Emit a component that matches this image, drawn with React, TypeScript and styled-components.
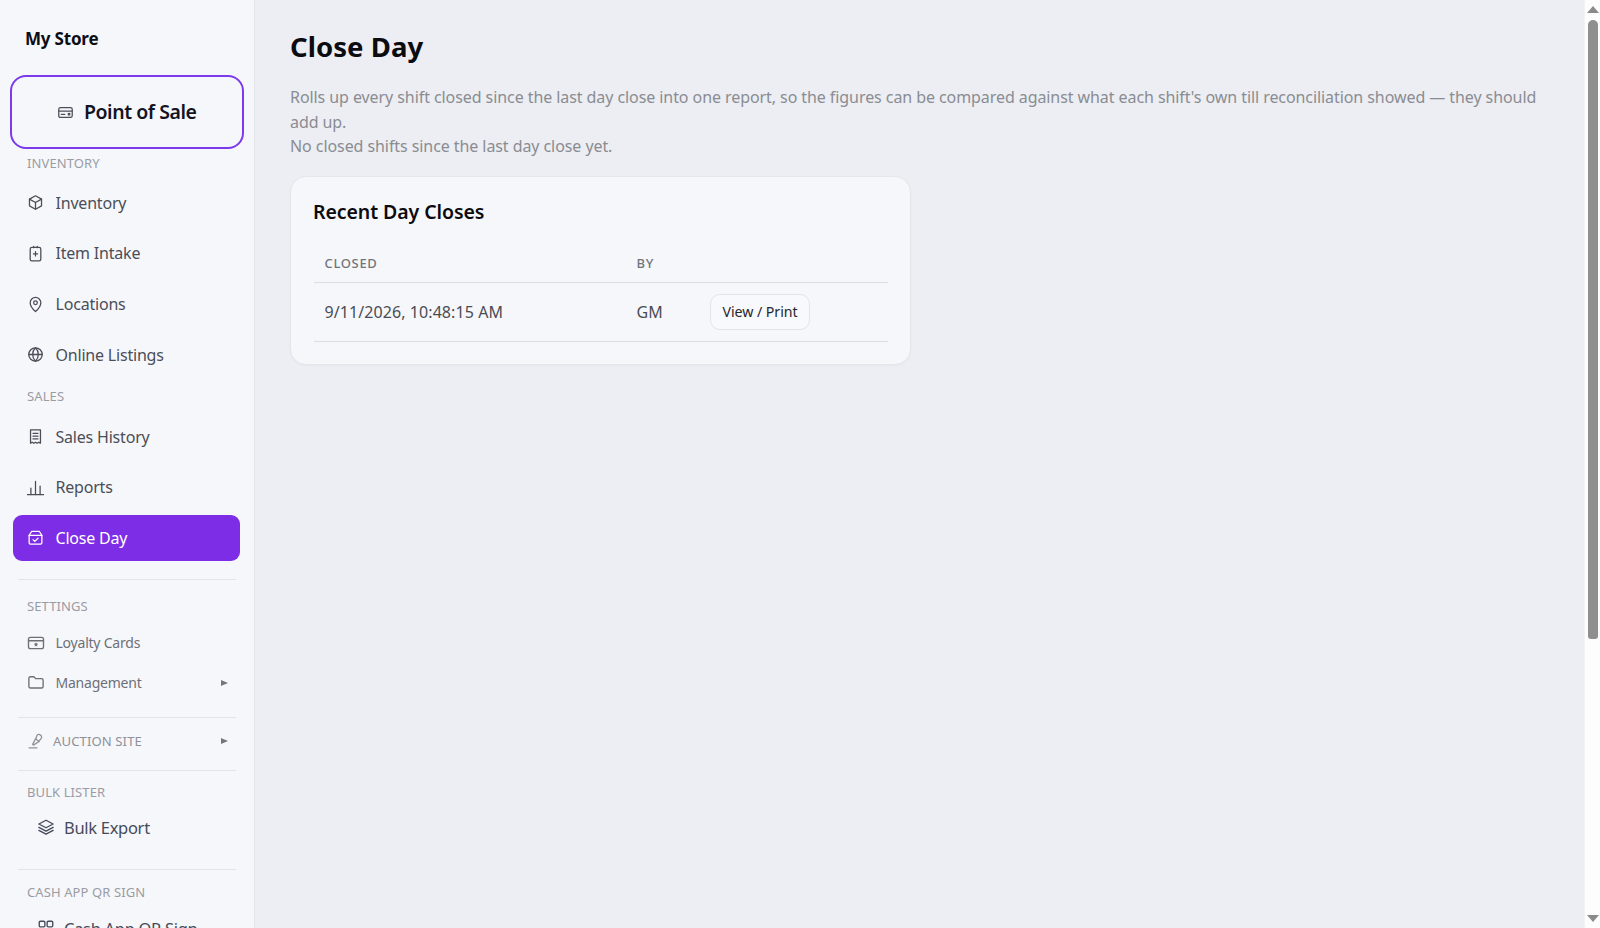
import React from 'react';
import styled, { createGlobalStyle } from 'styled-components';

const GlobalStyle = createGlobalStyle`
  html, body { margin: 0; padding: 0; height: 100%; overflow: hidden; }
  body { font-family: "Noto Sans", "Open Sans", sans-serif; background: #eceef3; color: #0b0b10; }
  * { box-sizing: border-box; }
`;

const Shell = styled.div`
  display: flex;
  height: 928px;
  overflow: hidden;
`;

const Sidebar = styled.aside`
  flex: 0 0 255px;
  height: 928px;
  overflow: hidden;
  background: #f6f7fb;
  border-right: 1px solid #e4e5ea;
`;

const Brand = styled.div`
  padding: 27px 0 0 25px;
  height: 75px;
  font-size: 17px;
  line-height: 24px;
  font-weight: 700;
  letter-spacing: -0.2px;
  color: #0d0d14;
`;

const PosButton = styled.button`
  display: flex;
  align-items: center;
  justify-content: center;
  gap: 10px;
  width: 234.5px;
  height: 74px;
  margin-left: 9.5px;
  padding: 0 0 2px;
  background: transparent;
  border: 2px solid #7c3aed;
  border-radius: 16px;
  font: inherit;
  font-size: 19.5px;
  font-weight: 600;
  letter-spacing: -0.45px;
  color: #14141f;
  svg { color: #4c4f58; margin-top: 2px; }
`;

const SectionLabel = styled.div<{ $top: number }>`
  height: 22px;
  margin-top: ${p => p.$top}px;
  padding-left: 27px;
  font-size: 13px;
  line-height: 20px;
  letter-spacing: 0.1px;
  text-transform: uppercase;
  color: #9a9ca3;
`;

const NavList = styled.div<{ $gap: number; $top: number }>`
  display: flex;
  flex-direction: column;
  gap: ${p => p.$gap}px;
  margin-top: ${p => p.$top}px;
`;

const NavItem = styled.a<{ $active?: boolean }>`
  display: flex;
  align-items: center;
  gap: 12px;
  height: 45.5px;
  margin: 0 14px 0 13px;
  padding-left: 13.5px;
  border-radius: 9px;
  font-size: 16px;
  letter-spacing: -0.2px;
  color: ${p => (p.$active ? '#ffffff' : '#4b4e57')};
  background: ${p => (p.$active ? '#7e2de6' : 'transparent')};
`;

const SmallItem = styled.a`
  display: flex;
  align-items: center;
  gap: 11px;
  height: 36px;
  margin: 0 14px 0 13px;
  padding: 0 12.5px 0 13.5px;
  font-size: 14px;
  letter-spacing: -0.22px;
  color: #6d7077;
`;

const IndentItem = styled.a`
  display: flex;
  align-items: center;
  gap: 9.5px;
  height: 46px;
  margin: 0 14px 0 13px;
  padding-left: 23.5px;
  font-size: 16.5px;
  letter-spacing: -0.3px;
  color: #454b5a;
`;

const Caret = styled.span`
  margin: 1px 0 0 auto;
  width: 0;
  height: 0;
  border-left: 7px solid #74767c;
  border-top: 3.5px solid transparent;
  border-bottom: 3.5px solid transparent;
`;

const Divider = styled.hr<{ $top: number }>`
  height: 1px;
  margin: ${p => p.$top}px 18px 0 18px;
  border: 0;
  background: #e3e4e8;
`;

const AuctionRow = styled.div`
  display: flex;
  align-items: center;
  gap: 9.5px;
  height: 24px;
  margin: 10.5px 26.5px 0 26.5px;
  font-size: 13.1px;
  letter-spacing: 0.1px;
  text-transform: uppercase;
  color: #8f9198;
`;

const Main = styled.main`
  flex: 1;
  min-width: 0;
  padding: 0 35px;
`;

const Title = styled.h1`
  margin: 27px 0 0;
  font-size: 27.5px;
  line-height: 40px;
  font-weight: 700;
  letter-spacing: 0.05px;
  color: #0b0b10;
`;

const Lead = styled.p`
  margin: 18px 0 0;
  font-size: 16px;
  line-height: 24.5px;
  letter-spacing: -0.075px;
  color: #8a8c92;
`;

const Card = styled.section`
  width: 621px;
  height: 189px;
  margin-top: 17px;
  padding: 21px 23px;
  background: #f6f7fb;
  border: 1px solid #e5e6eb;
  border-radius: 16px;
  box-shadow: 0 1px 2px rgba(20, 20, 40, 0.03);
`;

const CardTitle = styled.h2`
  margin: 0 0 0 -1px;
  font-size: 19.5px;
  line-height: 28px;
  font-weight: 600;
  letter-spacing: -0.08px;
  color: #0b0b10;
`;

const Table = styled.table`
  width: 574px;
  margin-top: 20px;
  table-layout: fixed;
  border-collapse: collapse;
`;

const HeadCell = styled.th`
  height: 37px;
  padding: 0 11px 1px 10.5px;
  border-bottom: 1px solid #dcdde2;
  text-align: left;
  font-size: 13px;
  font-weight: 500;
  letter-spacing: 0.65px;
  text-transform: uppercase;
  color: #72747a;
`;

const Cell = styled.td`
  height: 59px;
  padding: 0 11px 0 10.5px;
  border-bottom: 1px solid #dcdde2;
  font-size: 16px;
  letter-spacing: 0.08px;
  color: #4a4c54;
`;

const GhostButton = styled.button`
  display: block;
  height: 36px;
  width: 100px;
  margin-left: 0.5px;
  padding: 0 0 1px;
  background: #f8f9fc;
  border: 1px solid #e3e4e9;
  border-radius: 10px;
  font: inherit;
  font-size: 14.2px;
  letter-spacing: -0.05px;
  color: #25262c;
`;

const ScrollRail = styled.div`
  flex: 0 0 16px;
  display: flex;
  flex-direction: column;
  align-items: center;
  height: 928px;
  background: #fdfdfd;
  border-left: 1px solid #f3f3f5;
`;

const ArrowUp = styled.svg`
  flex: none;
  display: block;
  margin-top: 6px;
`;

const ArrowDown = styled.svg`
  flex: none;
  display: block;
  margin-bottom: 6px;
`;

const Thumb = styled.div`
  width: 10px;
  height: 619px;
  margin-top: 7px;
  border-radius: 5px 5px 3px 3px;
  background: #8f8f8f;
`;

const RailSpacer = styled.div`
  flex: 1;
`;

type IconProps = { size?: number };

const Svg = ({ size = 17, children }: IconProps & { children: React.ReactNode }) => (
  <svg width={size} height={size} viewBox="0 0 24 24" fill="none" stroke="currentColor" strokeWidth="1.8" strokeLinecap="round" strokeLinejoin="round" style={{ flex: 'none' }}>
    {children}
  </svg>
);

const PosIcon = () => (
  <Svg>
    <rect x="2.5" y="5" width="19" height="14" rx="2.5" />
    <path d="M2.5 10h19" />
    <path d="M6 14.5h5" />
    <circle cx="17" cy="14.5" r="1.2" />
  </Svg>
);
const BoxIcon = () => (
  <Svg>
    <path d="M12 2.5l8.500 4.800v9.400L12 21.500l-8.500-4.800V7.300z" />
    <path d="M3.500 7.300L12 12l8.500-4.700M12 12v9.500" />
  </Svg>
);
const IntakeIcon = () => (
  <Svg>
    <rect x="4.5" y="3.5" width="15" height="19" rx="2.5" />
    <path d="M9.5 1.8v2M14.5 1.8v2" />
    <path d="M12 9.5v6M9 12.5h6" />
  </Svg>
);
const PinIcon = () => (
  <Svg>
    <path d="M12 22s7.5-6.600 7.500-12.500a7.500 7.500 0 1 0-15 0C4.500 15.400 12 22 12 22z" />
    <circle cx="12" cy="9.5" r="2.6" />
  </Svg>
);
const GlobeIcon = () => (
  <Svg>
    <circle cx="12" cy="12" r="9.5" />
    <path d="M2.500 12h19M12 2.500c3 3 4 6 4 9.500s-1 6.500-4 9.500c-3-3-4-6-4-9.500s1-6.500 4-9.500z" />
  </Svg>
);
const ReceiptIcon = () => (
  <Svg>
    <path d="M5 2.500h14v19l-2.300-1.500-2.400 1.500-2.300-1.500-2.300 1.500L7.300 20 5 21.500z" />
    <path d="M8.500 7.500h7M8.500 11.500h7M8.500 15.500h7" />
  </Svg>
);
const BarsIcon = () => (
  <Svg>
    <path d="M.5 22h23" />
    <path d="M5.500 22v-9M12 22V3.500M18.500 22v-12" />
  </Svg>
);
const CloseDayIcon = () => (
  <Svg>
    <path d="M6.500 3.500h11L21 9v10a2.500 2.500 0 0 1-2.500 2.500h-13A2.500 2.500 0 0 1 3 19V9z" />
    <path d="M3 9h18" />
    <path d="M8.500 15l2.500 2.500 4.500-4.500" />
  </Svg>
);
const LoyaltyIcon = () => (
  <Svg size={18}>
    <rect x="2" y="4.500" width="20" height="15" rx="2.500" />
    <path d="M2 9h20" />
    <path d="M12 11l.9 1.800 2 .3-1.500 1.400.4 2-1.800-1-1.800 1 .4-2-1.500-1.400 2-.3z" fill="currentColor" stroke="none" />
  </Svg>
);
const FolderIcon = () => (
  <Svg size={18}>
    <path d="M2.500 7a2 2 0 0 1 2-2h4.700l2.300 2.500h8a2 2 0 0 1 2 2V18a2 2 0 0 1-2 2h-15a2 2 0 0 1-2-2z" />
  </Svg>
);
const AuctionIcon = () => (
  <Svg>
    <path d="M3 22.500h11" />
    <path d="M8 17.500l4-8 5 4-8 5z" />
    <path d="M12.500 9.500l1.500-4.500a3 3 0 0 1 5-.5 3 3 0 0 1 1 4.500l-3.500 4.500" />
  </Svg>
);
const LayersIcon = () => (
  <Svg size={18}>
    <path d="M12 3l9.500 5-9.500 5-9.500-5z" />
    <path d="M2.500 12.500l9.500 5 9.500-5" />
    <path d="M2.500 16.500l9.500 5 9.500-5" />
  </Svg>
);
const QrIcon = () => (
  <Svg size={18}>
    <rect x="3" y="3" width="7.500" height="7.500" rx="1.500" />
    <rect x="13.500" y="3" width="7.500" height="7.500" rx="1.500" />
    <rect x="3" y="13.500" width="7.500" height="7.500" rx="1.500" />
    <rect x="13.500" y="13.500" width="7.500" height="7.500" rx="1.500" />
  </Svg>
);

const App = () => (
  <Shell>
    <GlobalStyle />
    <Sidebar>
      <Brand>My Store</Brand>
      <PosButton>
        <PosIcon />
        Point of Sale
      </PosButton>

      <SectionLabel $top={4}>Inventory</SectionLabel>
      <NavList $gap={5.2} $top={5}>
        <NavItem><BoxIcon />Inventory</NavItem>
        <NavItem><IntakeIcon />Item Intake</NavItem>
        <NavItem><PinIcon />Locations</NavItem>
        <NavItem><GlobeIcon />Online Listings</NavItem>
      </NavList>

      <SectionLabel $top={8}>Sales</SectionLabel>
      <NavList $gap={5} $top={6.5}>
        <NavItem><ReceiptIcon />Sales History</NavItem>
        <NavItem><BarsIcon />Reports</NavItem>
        <NavItem $active><CloseDayIcon />Close Day</NavItem>
      </NavList>

      <Divider $top={18} />
      <SectionLabel $top={16}>Settings</SectionLabel>
      <NavList $gap={3.6} $top={7}>
        <SmallItem><LoyaltyIcon />Loyalty Cards</SmallItem>
        <SmallItem><FolderIcon />Management<Caret /></SmallItem>
      </NavList>

      <Divider $top={17} />
      <AuctionRow><AuctionIcon />Auction Site<Caret /></AuctionRow>
      <Divider $top={17} />

      <SectionLabel $top={11}>Bulk Lister</SectionLabel>
      <NavList $gap={0} $top={0.5}>
        <IndentItem><LayersIcon />Bulk Export</IndentItem>
      </NavList>

      <Divider $top={19} />
      <SectionLabel $top={12}>Cash App QR Sign</SectionLabel>
      <NavList $gap={0} $top={1}>
        <IndentItem><QrIcon />Cash App QR Sign</IndentItem>
      </NavList>
    </Sidebar>

    <Main>
      <Title>Close Day</Title>
      <Lead>
        Rolls up every shift closed since the last day close into one report, so the figures can be compared against what each shift's own till reconciliation showed — they should add up.
        <br />
        No closed shifts since the last day close yet.
      </Lead>
      <Card>
        <CardTitle>Recent Day Closes</CardTitle>
        <Table>
          <colgroup>
            <col style={{ width: 312 }} />
            <col style={{ width: 73 }} />
            <col />
          </colgroup>
          <thead>
            <tr>
              <HeadCell>Closed</HeadCell>
              <HeadCell>By</HeadCell>
              <HeadCell />
            </tr>
          </thead>
          <tbody>
            <tr>
              <Cell>9/11/2026, 10:48:15 AM</Cell>
              <Cell>GM</Cell>
              <Cell><GhostButton>View / Print</GhostButton></Cell>
            </tr>
          </tbody>
        </Table>
      </Card>
    </Main>

    <ScrollRail>
      <ArrowUp width="12" height="7" viewBox="0 0 12 7"><path d="M6 0l6 7H0z" fill="#8a8a8a" /></ArrowUp>
      <Thumb />
      <RailSpacer />
      <ArrowDown width="12" height="7" viewBox="0 0 12 7"><path d="M0 0h12L6 7z" fill="#8a8a8a" /></ArrowDown>
    </ScrollRail>
  </Shell>
);

export default App;
